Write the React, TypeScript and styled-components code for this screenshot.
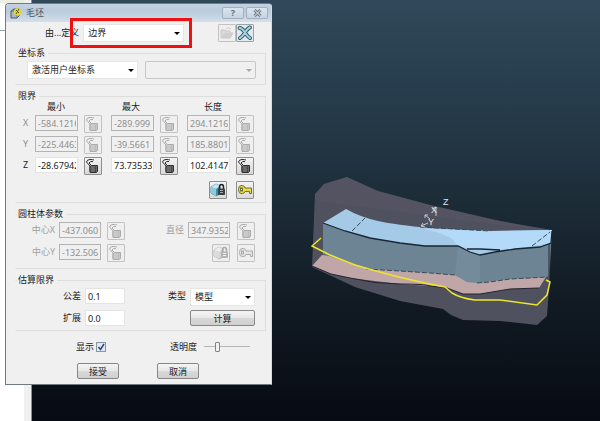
import React, { useState } from "react";
import styled, { createGlobalStyle, css } from "styled-components";

const GlobalStyle = createGlobalStyle`
  *, *::before, *::after { box-sizing: border-box; }
  html, body { margin: 0; padding: 0; }
  body, button, input, select {
    font-family: "Noto Sans", "Noto Sans CJK SC", sans-serif;
    font-size: 9px;
    line-height: 12px;
    color: #1c1c1c;
  }
`;

const Desktop = styled.main`
  position: relative;
  display: flex;
  align-items: flex-start;
  min-height: 100vh;
  overflow: hidden;
  background: linear-gradient(#304859 0%, #273d4d 22%, #1c2c37 48%, #111a23 72%, #070b13 100%);
`;

const BackPanel = styled.aside`
  position: absolute;
  inset: 0 auto 0 0;
  width: 32px;
  background: linear-gradient(#edeee2 0 3px, #ffffff 3px 30px, #9aa0a4 30px 31px, #ffffff 31px);
  border-right: 1px solid #8b8f92;

  &::after {
    content: "";
    position: absolute;
    inset: 0 0 0 auto;
    width: 7px;
    background: #f0f0f0;
  }
`;

const Dialog = styled.form`
  position: relative;
  width: 44.5%;
  min-width: 267px;
  margin: 3px 0 0 5px;
  border: 1px solid #6f7a82;
  border-right-color: #d5dde2;
  border-radius: 4px 4px 0 0;
  background: #f0f0f0;
`;

const TitleBar = styled.header`
  display: flex;
  align-items: center;
  gap: 4px;
  height: 18px;
  padding: 0 3px 0 4px;
  border-radius: 3px 3px 0 0;
  background: linear-gradient(#c3d2e1, #b9cbdd 40%, #d3dfea);
`;

const Title = styled.h1`
  flex: 1;
  margin: 0;
  font-size: 9px;
  font-weight: 400;
  color: #4b555e;
`;

const CaptionButton = styled.button`
  display: grid;
  place-items: center;
  width: 22px;
  height: 12px;
  margin-left: -2px;
  padding: 0;
  border: 1px solid #a3afba;
  border-radius: 2px;
  background: linear-gradient(#dbe5ee, #c6d4e1);
  font-weight: 700;
  line-height: 10px;
  color: #67727d;
`;

const Body = styled.div`
  display: flex;
  flex-direction: column;
  gap: 5px;
  padding: 2px 5px 5px 9px;
`;

const DefineRow = styled.div`
  display: flex;
  align-items: center;
  height: 18px;
  padding: 0 12px 0 30px;
`;

const Label = styled.label<{ $muted?: boolean }>`
  white-space: nowrap;
  color: ${(p) => (p.$muted ? "#a0a0a0" : "#1c1c1c")};
`;

const DefineField = styled.div`
  position: relative;
  flex: 1;
  margin: 0 34px 0 4px;
`;

const Highlight = styled.span`
  position: absolute;
  inset: -6px -8px -6px -13px;
  border: 3px solid #ee1111;
  pointer-events: none;
`;

const SelectBox = styled.span<{ $disabled?: boolean }>`
  position: relative;
  display: block;
  min-width: 0;

  &::after {
    content: "";
    position: absolute;
    top: 8px;
    right: 4px;
    border: 3px solid transparent;
    border-top-color: ${(p) => (p.$disabled ? "#a6a6a6" : "#000")};
    border-bottom: 0;
    pointer-events: none;
  }
`;

const Select = styled.select`
  appearance: none;
  display: block;
  width: 100%;
  height: 18px;
  padding: 0 12px 0 4px;
  border: 1px solid #e6e6e6;
  border-radius: 0;
  background: #ffffff;

  &:disabled {
    border-color: #c6c6c6;
    border-radius: 2px;
    background: #f0f0f0;
    opacity: 1;
  }
`;

const Group = styled.fieldset<{ $right: number; $bottom: number }>`
  min-width: 0;
  margin: 0;
  padding: 0 ${(p) => p.$right}px ${(p) => p.$bottom}px 5px;
  border: 1px solid #dddddd;
  border-left-color: transparent;
`;

const Legend = styled.legend`
  margin-left: -4px;
  padding: 0 3px 0 1px;
`;

const FramePair = styled.div`
  display: grid;
  grid-template-columns: 1fr 1fr;
  gap: 7px;
  padding: 2px 0 0 6px;
`;

const LimitHead = styled.div`
  display: grid;
  grid-template-columns: 14px 42fr 108fr 56fr 22fr;
  height: 13px;
  text-align: center;
  line-height: 10px;
`;

const LimitRows = styled.div`
  display: grid;
  gap: 3px;
`;

const LimitRow = styled.div`
  display: grid;
  grid-template-columns: 14px repeat(3, 1fr);
`;

const AxisLabel = styled.span<{ $muted?: boolean }>`
  padding: 2px 0 0 2px;
  color: ${(p) => (p.$muted ? "#8d8d8d" : "#1c1c1c")};
`;

const LimitCell = styled.div`
  display: flex;
  gap: 6px;
  padding-right: 9px;
`;

const TextBox = styled.input`
  flex: 1;
  width: 100%;
  min-width: 0;
  height: 16px;
  padding: 0 1px 0 2px;
  border: 1px solid #e4e4e4;
  border-radius: 0;
  background: #ffffff;

  &:disabled {
    border-color: #b4b4b4;
    background: #f0f0f0;
    color: #8f8f8f;
  }
`;

const IconButton = styled.button<{ $flat?: boolean }>`
  display: grid;
  flex: none;
  place-items: center;
  width: 18px;
  height: 18px;
  padding: 0;
  border: 1px solid #8e8e8e;
  border-radius: 1px;
  background: linear-gradient(#f3f3f3, #d9d9d9);

  &:disabled {
    border-color: #c2c2c2;
    background: #efefef;
  }
  ${(p) =>
    p.$flat &&
    css`
      border-color: #9aa5ab;
      background: #e2e9ec;
    `}
`;

const IconRow = styled.div`
  display: flex;
  justify-content: flex-end;
  gap: 9px;
  padding: 3px 9px 0 0;
`;

const CylinderGrid = styled.div`
  display: grid;
  grid-template-columns: 38px 42fr 24px 63px 42fr 25px;
  row-gap: 4px;
  padding-top: 2px;
`;

const EstimateGrid = styled.div`
  display: grid;
  grid-template-columns: 64px 40fr 65px 65fr;
  row-gap: 4px;
  padding-top: 2px;
`;

const CellLabel = styled(Label)`
  padding: 2px 4px 0 0;
  text-align: right;
`;

const IconCell = styled.div<{ $column?: number }>`
  display: flex;
  justify-content: flex-end;
  ${(p) => p.$column && `grid-column: ${p.$column};`}
`;

const PushButton = styled.button`
  height: 16px;
  padding: 0;
  border: 1px solid #878787;
  border-radius: 2px;
  background: linear-gradient(#f4f4f4, #e8e8e8 48%, #d8d8d8 52%, #d0d0d0);
  line-height: 13px;
`;

const DisplayRow = styled.div`
  display: flex;
  align-items: center;
  height: 18px;
  padding: 3px 16px 0 61px;
`;

const CheckWrap = styled.span`
  position: relative;
  display: flex;
  flex: 1;

  svg {
    position: absolute;
    top: 0;
    left: 2px;
    pointer-events: none;
  }
`;

const CheckBox = styled.input`
  appearance: none;
  width: 10px;
  height: 10px;
  margin: 0 auto 0 2px;
  border: 1px solid #8797a6;
  background: #dfe8f2;
`;

const Slider = styled.input`
  appearance: none;
  width: 46px;
  height: 12px;
  margin: 0 0 0 7px;
  background: linear-gradient(#b5b5b5, #b5b5b5) center / 100% 1px no-repeat;

  &::-webkit-slider-thumb {
    appearance: none;
    width: 5px;
    height: 10px;
    border: 1px solid #838383;
    border-radius: 1px;
    background: #f1f1f1;
  }
`;

const Actions = styled.footer`
  display: grid;
  grid-template-columns: 42px 42px;
  gap: 38px;
  padding: 4px 0 0 62px;
`;

const Viewport = styled.section`
  position: relative;
  flex: 1;
  min-width: 0;

  svg {
    display: block;
    width: 100%;
  }
`;

const LockIcon = ({ muted }: { muted?: boolean }) => {
  const c = muted ? "#ababab" : "#2d2d2d";
  return (
    <svg width="16" height="16" viewBox="0 0 16 16" fill="none" stroke={c} aria-hidden="true">
      <path d="M1.5 4Q2 1.5 5 1.500T9 2M4 5Q5 3 8 3.500M1.500 4L5 8V13.500M4 5L6.500 7.500" />
      <path d="M5 8.500L6.500 7.500H12.500V13.500L11 14.500H5Z" fill={muted ? "#c9c9c9" : "#6b6b6b"} />
      <path d="M10.500 8.500V14" stroke={muted ? "#bababa" : "#444"} />
    </svg>
  );
};

const CubeLockIcon = ({ muted }: { muted?: boolean }) => (
  <svg width="16" height="16" viewBox="0 0 16 16" aria-hidden="true">
    <path d="M1 5L6 2L10 4V12L6 14L1 11Z" fill={muted ? "#d4d4d4" : "#3f8fb0"} stroke={muted ? "#b4b4b4" : "#5796ad"} />
    <path d="M1 5L6 2L10 4L6 7Z" fill={muted ? "#ededed" : "#c4e9f4"} />
    <path d="M6 7V14L1 11V5Z" fill={muted ? "#dcdcdc" : "#8accE0"} />
    <path d="M9.500 7V5Q9.500 2.500 11.500 2.500T13.500 5V7" fill="none" stroke={muted ? "#a8a8a8" : "#222"} strokeWidth="1.500" />
    <rect x="8" y="6.500" width="7" height="6.500" rx="1" fill={muted ? "#b4b4b4" : "#3a3d40"} />
    <path d="M10 8.500H13M10 10.500H13" stroke={muted ? "#eee" : "#aaa"} />
  </svg>
);

const KeyIcon = ({ muted }: { muted?: boolean }) => (
  <svg width="16" height="16" viewBox="0 0 16 16" aria-hidden="true">
    <path
      d="M4 3.500H5.500Q7.500 3.500 8 6H14.500V11.500H12.500V9.500H8Q7.500 11.500 5.500 11.500H4Q1.500 11.500 1.500 7.500T4 3.500Z"
      fill={muted ? "#e4e4e4" : "#e2db4c"}
      stroke={muted ? "#ababab" : "#77712b"}
    />
    <rect x="3.500" y="6" width="2" height="3" fill={muted ? "#f0f0f0" : "#fbfae0"} stroke={muted ? "#ababab" : "#77712b"} />
  </svg>
);

const FolderIcon = () => (
  <svg width="16" height="16" viewBox="0 0 16 16" aria-hidden="true">
    <path d="M2 13V5H6L7 6H11V8H14L11 13Z" fill="#dadada" stroke="#c8c8c8" />
    <path d="M2 13L5 8H14L11 13Z" fill="#cecece" />
    <path d="M7 4Q9 1 12 4" fill="none" stroke="#cccccc" />
  </svg>
);

const DeleteIcon = () => (
  <svg width="16" height="16" viewBox="0 0 16 16" aria-hidden="true" fill="none" strokeLinecap="round">
    <path d="M2.500 3Q5 3 8 7.500T13 13M13 2.500Q11 3 8 7.500T3 13" stroke="#36606f" strokeWidth="4" />
    <path d="M2.500 3Q5 3 8 7.500T13 13M13 2.500Q11 3 8 7.500T3 13" stroke="#a4d2de" strokeWidth="2" />
  </svg>
);

const AppIcon = () => (
  <svg width="12" height="12" viewBox="0 0 12 12" aria-hidden="true">
    <path d="M1 4L4 2H9V9L7 11H1Z" fill="#a9b8c4" stroke="#4c5964" />
    <path d="M1 4H7V11" fill="none" stroke="#66747f" />
    <path d="M6 1L11 2V7L8 9L4 7V4Z" fill="#e6d72f" />
    <path d="M6 3L9 6M9 2L6 7" stroke="#5f5a20" />
  </svg>
);

const Scene = () => (
  <svg viewBox="272 0 328 421" role="img" aria-label="XYZ">
    <path
      d="M315 194L324 184L347 177L360 183L378 191L430 205L500 221L552 230L549 288L547 316L537 325L500 321L463 320L451 315L443 309L400 301L355 287L312 267Z"
      fill="#50515f"
    />
    <path d="M315 194V200L323 202L545 231H552L500 221L430 205L378 191L347 177L324 184Z" fill="#575664" opacity="0.500" />
    <path d="M322 255L546 277L539 288L510 289L480 294H463L447 288L430 286L400 284L350 278L331 274L312 266Z" fill="#c1a6a7" />
    <path d="M312 266L331 274L350 278Q375 284 400 284T430 286L447 288L463 294H480L510 289L539 288" fill="none" stroke="#242430" />
    <path
      d="M323 223L345 231L370 238L400 243L425 246H458L470 252L480 255L515 249L551 243L549 277L530 278L510 279L480 283L467 282L455 275L430 273L400 271L370 269L344 261L323 254Z"
      fill="#6d8495"
    />
    <path d="M458 246L470 252L480 255V283L467 282L455 275Z" fill="#7890a0" opacity="0.600" />
    <path
      d="M323 223L346 209Q360 217 378 221T430 228L490 231L552 230L551 243L540 247L515 249L480 255L470 252L458 246H425L400 243L370 238L345 231Z"
      fill="#a5cae7"
    />
    <path d="M425 229L490 231L552 230L550 243L515 249L475 250L458 246L452 239Q445 234 425 229Z" fill="#b3daf8" />
    <path
      d="M323 223L345 231L370 238L400 243L425 246H458L470 252L480 255L495 252L515 249L540 247L551 243L552 231M467 249H480L500 250"
      fill="none"
      stroke="#172735"
      strokeWidth="1.300"
    />
    <path
      d="M352 231L365 218M532 246L550 232M366 269L400 271L430 273L455 275M477 283L490 282L510 279L548 277M420 227L490 231"
      fill="none"
      stroke="#384b59"
      strokeDasharray="5 2"
    />
    <path d="M549 244V277" stroke="#222f3b" />
    <path
      d="M321 238L312 246L330 255L355 265Q395 277 430 284L445 287L452 293Q460 298 475 300H500L537 305L547 295L550 282L546 280"
      fill="none"
      stroke="#ebe62e"
      strokeWidth="1.500"
    />
    <path d="M428 223L421 226M423 223L421 226L425 227M430 219L425 215M428 215H425V218M436 216V207L432 209" stroke="#c5c8ce" fill="none" />
    <g fill="#e3e5e8" fontFamily="Liberation Sans, sans-serif" fontSize="9">
      <text x="443" y="205">Z</text>
      <text x="431" y="213">X</text>
      <text x="428" y="225">Y</text>
    </g>
  </svg>
);

const limits = [
  { axis: "X", values: ["-584.1216", "-289.999", "294.1216"], disabled: true },
  { axis: "Y", values: ["-225.4463", "-39.5661", "185.8801"], disabled: true },
  { axis: "Z", values: ["-28.67942", "73.73533", "102.4147"], disabled: false },
];
const columns = ["最小", "最大", "长度"];

export default function App() {
  const [shown, setShown] = useState(true);

  return (
    <>
      <GlobalStyle />
      <Desktop lang="zh-CN">
        <BackPanel />
        <Dialog onSubmit={(e) => e.preventDefault()}>
          <TitleBar>
            <AppIcon />
            <Title>毛坯</Title>
            <CaptionButton type="button" aria-label="帮助">?</CaptionButton>
            <CaptionButton type="button" aria-label="关闭">
              <svg width="9" height="8" viewBox="0 0 9 8" aria-hidden="true">
                <path d="M1.500 1L7.500 7M7.500 1L1.500 7" stroke="#6b7681" strokeWidth="3" />
                <path d="M1.500 1L7.500 7M7.500 1L1.500 7" stroke="#f1f5f8" />
              </svg>
            </CaptionButton>
          </TitleBar>

          <Body>
            <DefineRow>
              <Label htmlFor="define">由...定义</Label>
              <DefineField>
                <SelectBox>
                  <Select id="define"><option>边界</option></Select>
                </SelectBox>
                <Highlight />
              </DefineField>
              <IconButton type="button" disabled aria-label="打开"><FolderIcon /></IconButton>
              <IconButton type="button" $flat aria-label="删除"><DeleteIcon /></IconButton>
            </DefineRow>

            <Group $right={9} $bottom={5}>
              <Legend>坐标系</Legend>
              <FramePair>
                <SelectBox>
                  <Select aria-label="坐标系"><option>激活用户坐标系</option></Select>
                </SelectBox>
                <SelectBox $disabled>
                  <Select disabled aria-label="用户坐标系" />
                </SelectBox>
              </FramePair>
            </Group>

            <Group $right={2} $bottom={3}>
              <Legend>限界</Legend>
              <LimitHead>
                <span />
                {columns.map((c) => <span key={c}>{c}</span>)}
              </LimitHead>
              <LimitRows>
                {limits.map(({ axis, values, disabled }) => (
                  <LimitRow key={axis}>
                    <AxisLabel $muted={disabled}>{axis}</AxisLabel>
                    {values.map((v, i) => (
                      <LimitCell key={columns[i]}>
                        <TextBox aria-label={`${axis} ${columns[i]}`} defaultValue={v} disabled={disabled} />
                        <IconButton type="button" disabled={disabled} aria-label={`锁定 ${axis} ${columns[i]}`}>
                          <LockIcon muted={disabled} />
                        </IconButton>
                      </LimitCell>
                    ))}
                  </LimitRow>
                ))}
                <IconRow>
                  <IconButton type="button" aria-label="锁定"><CubeLockIcon /></IconButton>
                  <IconButton type="button" aria-label="解锁"><KeyIcon /></IconButton>
                </IconRow>
              </LimitRows>
            </Group>

            <Group $right={10} $bottom={6}>
              <Legend>圆柱体参数</Legend>
              <CylinderGrid>
                <CellLabel $muted htmlFor="cx">中心X</CellLabel>
                <TextBox id="cx" defaultValue="-437.060" disabled />
                <IconCell><IconButton type="button" disabled aria-label="锁定中心X"><LockIcon muted /></IconButton></IconCell>
                <CellLabel $muted htmlFor="dia">直径</CellLabel>
                <TextBox id="dia" defaultValue="347.9352" disabled />
                <IconCell><IconButton type="button" disabled aria-label="锁定直径"><LockIcon muted /></IconButton></IconCell>
                <CellLabel $muted htmlFor="cy">中心Y</CellLabel>
                <TextBox id="cy" defaultValue="-132.506" disabled />
                <IconCell><IconButton type="button" disabled aria-label="锁定中心Y"><LockIcon muted /></IconButton></IconCell>
                <IconCell $column={5}><IconButton type="button" disabled aria-label="锁定"><CubeLockIcon muted /></IconButton></IconCell>
                <IconCell><IconButton type="button" disabled aria-label="解锁"><KeyIcon muted /></IconButton></IconCell>
              </CylinderGrid>
            </Group>

            <Group $right={10} $bottom={4}>
              <Legend>估算限界</Legend>
              <EstimateGrid>
                <CellLabel htmlFor="tol">公差</CellLabel>
                <TextBox id="tol" defaultValue="0.1" />
                <CellLabel htmlFor="kind">类型</CellLabel>
                <SelectBox>
                  <Select id="kind"><option>模型</option></Select>
                </SelectBox>
                <CellLabel htmlFor="expand">扩展</CellLabel>
                <TextBox id="expand" defaultValue="0.0" />
                <span />
                <PushButton type="button">计算</PushButton>
              </EstimateGrid>
            </Group>

            <DisplayRow>
              <Label htmlFor="show">显示</Label>
              <CheckWrap>
                <CheckBox id="show" type="checkbox" checked={shown} onChange={(e) => setShown(e.target.checked)} />
                {shown && (
                  <svg width="10" height="10" viewBox="0 0 10 10" aria-hidden="true">
                    <path d="M2.500 5L4.500 7.500L8 2" fill="none" stroke="#34427a" strokeWidth="1.500" />
                  </svg>
                )}
              </CheckWrap>
              <Label htmlFor="opacity">透明度</Label>
              <Slider id="opacity" type="range" min="0" max="100" defaultValue="27" />
            </DisplayRow>

            <Actions>
              <PushButton type="submit">接受</PushButton>
              <PushButton type="button">取消</PushButton>
            </Actions>
          </Body>
        </Dialog>
        <Viewport><Scene /></Viewport>
      </Desktop>
    </>
  );
}
